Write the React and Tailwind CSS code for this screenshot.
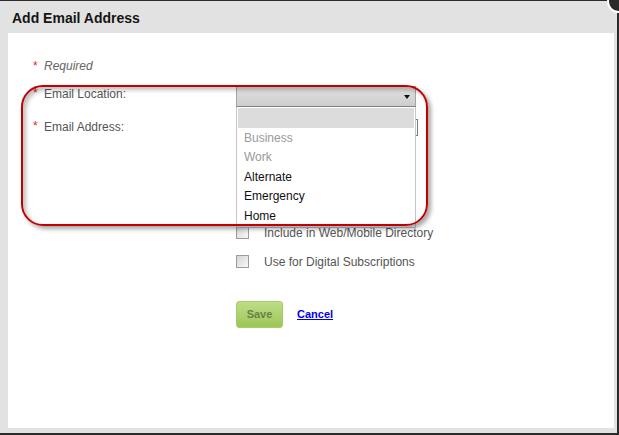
const options = [
  { label: "", muted: false },
  { label: "Business", muted: true },
  { label: "Work", muted: true },
  { label: "Alternate", muted: false },
  { label: "Emergency", muted: false },
  { label: "Home", muted: false },
];

function Star() {
  return <span className="w-[11px] shrink-0 text-[#e0282c] leading-[14px]">*</span>;
}

function Checkbox() {
  return (
    <div className="w-[13px] h-[13px] shrink-0 border border-[#9c9c9c] bg-gradient-to-br from-[#d6d6d6] to-[#f8f8f8]" />
  );
}

export default function App() {
  return (
    <div
      className="relative w-[619px] h-[435px] overflow-hidden bg-[#2b2b2b] pt-[1px] pb-[2px] pr-[2px] text-[12px]"
      style={{ fontFamily: '"Liberation Sans", Arial, sans-serif' }}
    >
      <div className="h-full bg-[#e2e2e2] flex flex-col">
        {/* header */}
        <div className="h-[32px] shrink-0 pl-[12px] pt-[9px]">
          <h1 className="text-[14px] leading-[16px] font-bold text-[#151515]">Add Email Address</h1>
        </div>

        {/* body */}
        <div className="relative ml-[8px] mr-[3px] h-[395px] shrink-0 bg-white pt-[26px] pl-[25px]">
          <div className="flex h-[14px] leading-[14px]">
            <Star />
            <span className="italic text-[#666]">Required</span>
          </div>

          <div className="flex items-start mt-[13px]">
            <Star />
            <span className="w-[192px] shrink-0 pt-[1px] leading-[14px] text-[#555]">Email Location:</span>
            <div className="relative w-[180px] h-[21px] border border-[#a4a4a4] border-b-[#808080] bg-gradient-to-b from-[#e2e2e2] to-[#cdcdcd]">
              <div className="absolute right-[5px] top-[8px] w-0 h-0 border-l-[3px] border-r-[3px] border-t-[4px] border-l-transparent border-r-transparent border-t-[#111]" />
            </div>
          </div>

          <div className="flex items-start mt-[12px]">
            <Star />
            <span className="w-[192px] shrink-0 pt-[1px] leading-[14px] text-[#555]">Email Address:</span>
            <div className="w-[182px] h-[17px] border border-[#7c7c7c] bg-white" />
          </div>

          <div className="flex items-center gap-[15px] mt-[90px] ml-[203px] h-[13px]">
            <Checkbox />
            <span className="leading-[14px] text-[#555]">Include in Web/Mobile Directory</span>
          </div>

          <div className="flex items-center gap-[15px] mt-[16px] ml-[203px] h-[13px]">
            <Checkbox />
            <span className="leading-[14px] text-[#555]">Use for Digital Subscriptions</span>
          </div>

          <div className="flex items-center gap-[14px] mt-[33px] ml-[203px]">
            <button className="w-[47px] h-[27px] rounded-[3px] border border-[#a8cc6c] bg-gradient-to-b from-[#bedd86] to-[#9cc657] text-[11px] font-bold text-[#6c7f47]">
              Save
            </button>
            <a href="#" className="text-[11px] font-bold text-[#0000ee] underline">
              Cancel
            </a>
          </div>

          {/* open dropdown list */}
          <div className="absolute left-[228px] top-[74px] w-[180px] pt-[1px] pb-[2px] bg-white border-l border-r border-b border-[#c4c4d0]">
            {options.map((o, i) => (
              <div
                key={i}
                className={
                  "h-[19.5px] leading-[20px] pl-[7px] " +
                  (i === 0 ? "bg-[#dcdcdc] mx-[1px]" : "") +
                  (o.muted ? " text-[#9a9a9a]" : " text-[#111]")
                }
              >
                {o.label}
              </div>
            ))}
          </div>

          {/* red annotation */}
          <div className="pointer-events-none absolute left-[13px] top-[52px] w-[407px] h-[141px] rounded-[22px] border-2 border-[#c20000] shadow-[3px_3px_4px_rgba(0,0,0,0.35),inset_3px_3px_4px_rgba(0,0,0,0.25)]" />
        </div>
      </div>

      {/* close button */}
      <div className="absolute right-[-11px] top-[-10px] w-[23px] h-[23px] rounded-full bg-[#2a2a2a] border-2 border-white" />
    </div>
  );
}
